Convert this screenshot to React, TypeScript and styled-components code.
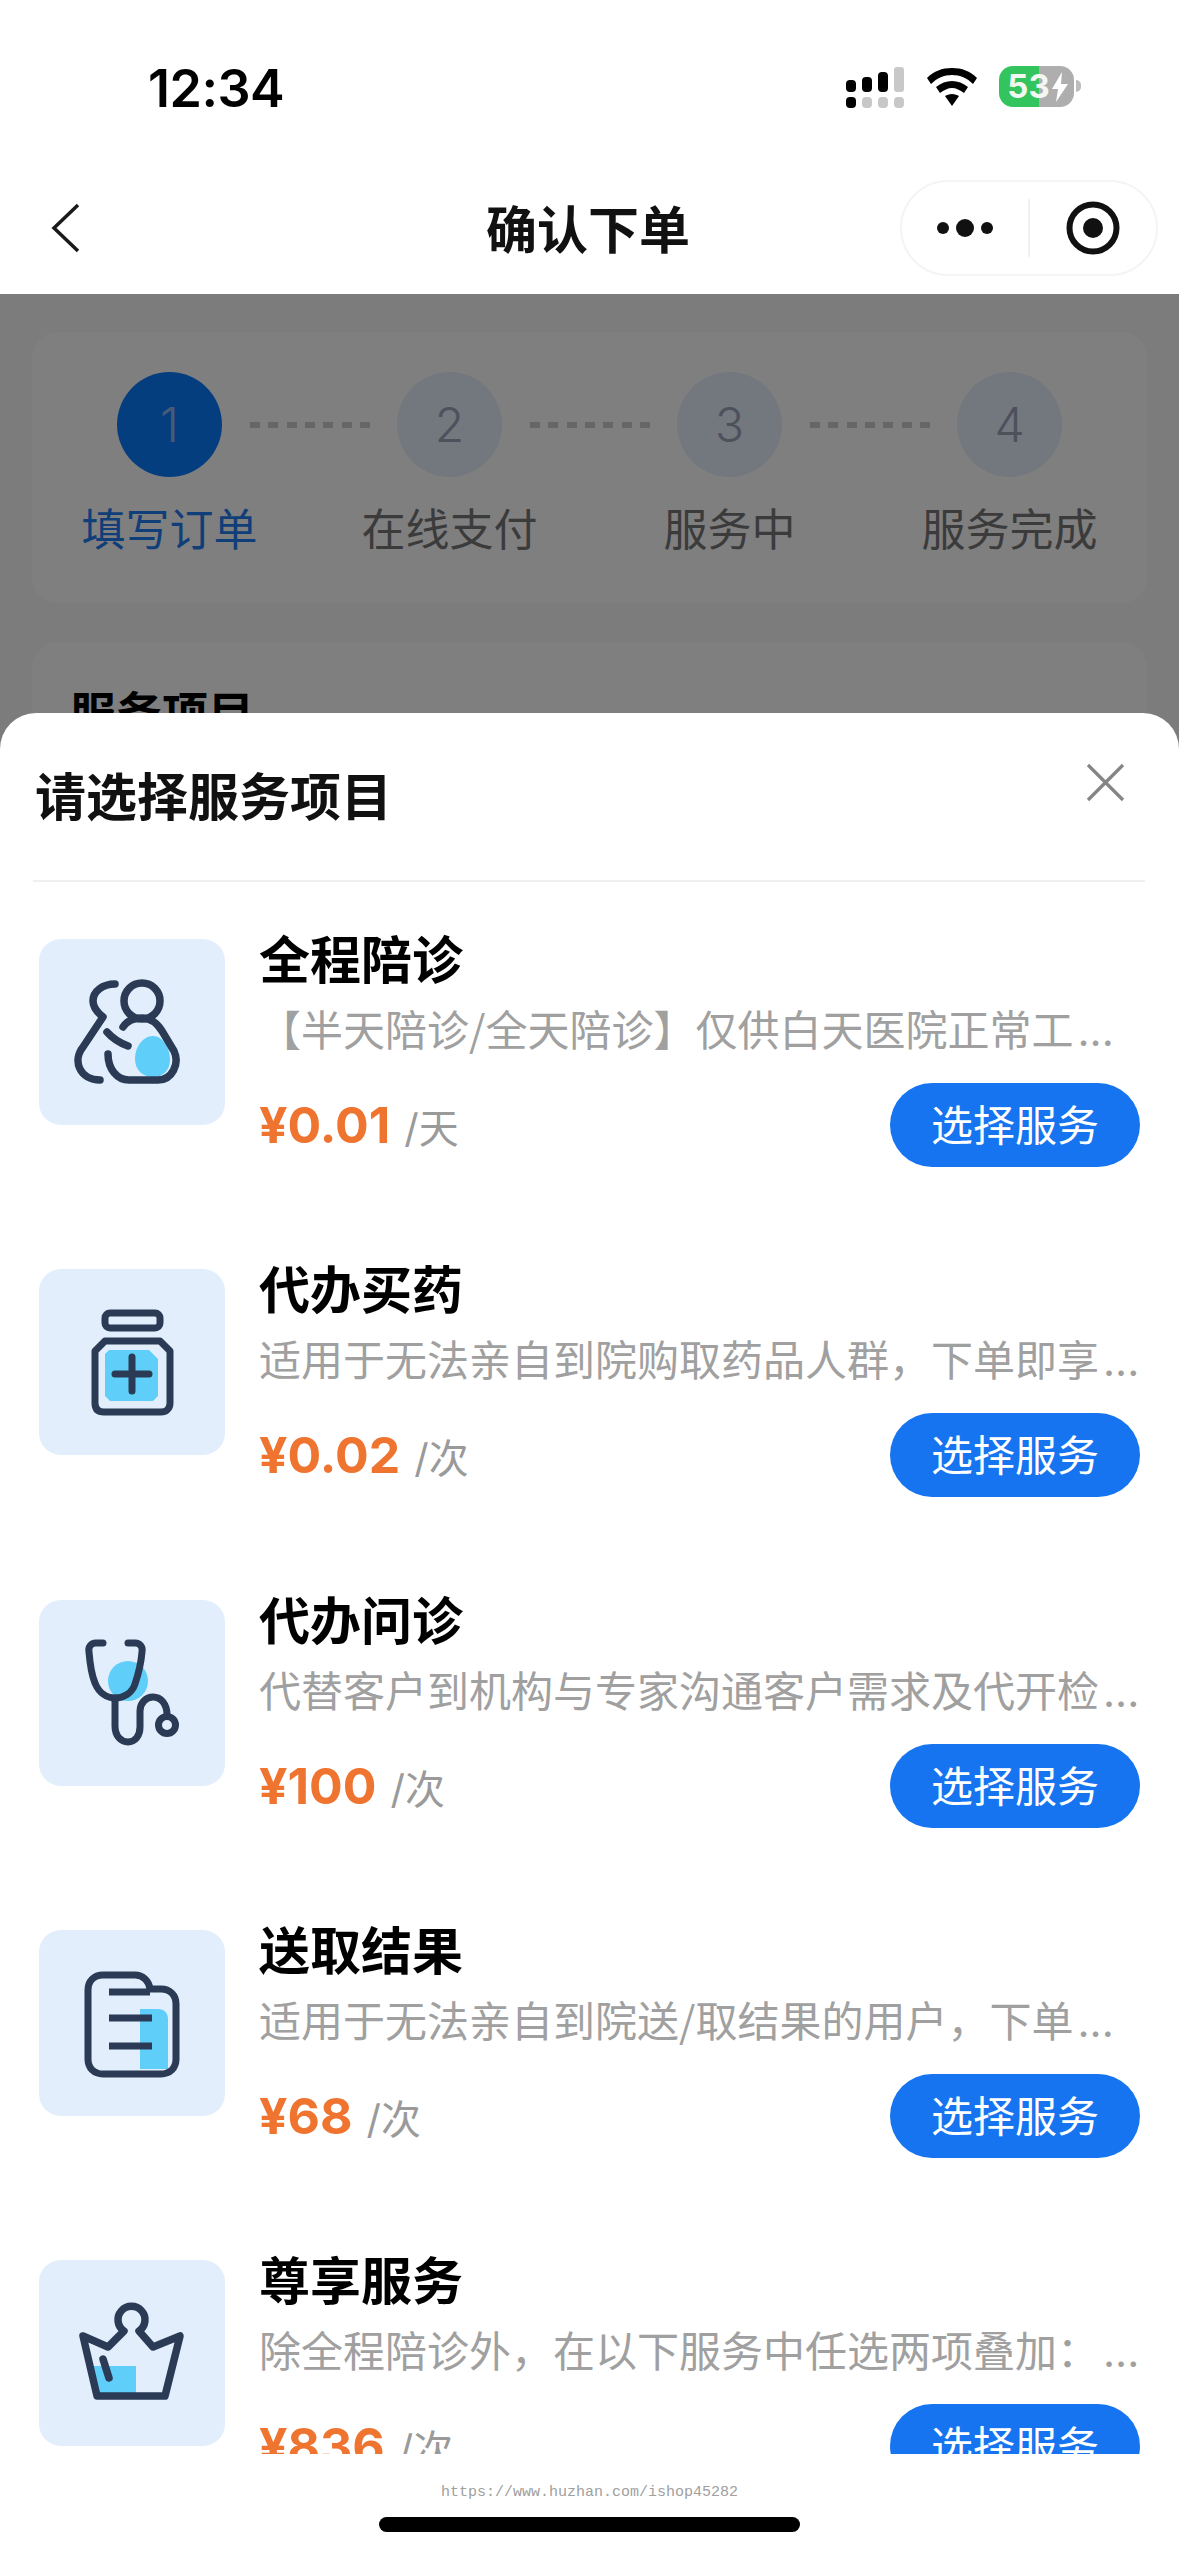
import React from "react";
import styled, { createGlobalStyle } from "styled-components";

const GlobalStyle = createGlobalStyle`
  html, body {
    margin: 0;
    padding: 0;
    background: #fff;
  }
  * {
    box-sizing: border-box;
  }
`;

const FONT = `"Inter", "Noto Sans CJK SC", sans-serif`;
const CJK = `"Noto Sans CJK SC", sans-serif`;
const INK = "#2b3a55";
const SKY = "#5fcffa";

const steps = [
  { num: 1, label: "填写订单" },
  { num: 2, label: "在线支付" },
  { num: 3, label: "服务中" },
  { num: 4, label: "服务完成" },
];

const HugIcon = () => (
  <IconSvg viewBox="0 0 186 186">
    <path fill={SKY} d="M96 120c0-12 8-23 18-23 10 0 17 12 17 24 0 11-8 17-17 17-10 0-18-7-18-18z" />
    <g fill="none" stroke={INK} strokeWidth="7.5" strokeLinecap="round" strokeLinejoin="round">
      <ellipse cx="103" cy="62" rx="18" ry="18" />
      <path d="M84 88c4-6 11-9 19-9 9 0 15 5 20 13l12 20c6 13-2 29-16 29H90c-12 0-21-11-21-26" />
      <path d="M76 45c-12 0-22 7-22 17 0 7 5 12 10 16L44 108c-11 14-3 33 17 33" />
      <path d="M68 93c6 7 13 11 21 14" />
    </g>
  </IconSvg>
);

const BottleIcon = () => (
  <IconSvg viewBox="0 0 186 186">
    <path fill={SKY} d="M70 81h40l9 9v37l-5 5H71l-5-5V85z" />
    <g fill="none" stroke={INK} strokeWidth="7" strokeLinecap="round" strokeLinejoin="round">
      <rect x="66" y="44" width="55" height="15" rx="5" />
      <path d="M66 72h55l10 10v52c0 6-4 9-9 9H65c-6 0-9-3-9-9V82z" />
      <path d="M76 105h34M93 88v34" />
    </g>
  </IconSvg>
);

const StethoscopeIcon = () => (
  <IconSvg viewBox="0 0 186 186">
    <circle cx="89" cy="81" r="20" fill={SKY} />
    <g fill="none" stroke={INK} strokeWidth="7" strokeLinecap="round" strokeLinejoin="round">
      <path d="M64 43h-7c-5 0-8 4-7 9 1 12 3 24 6 31 4 10 12 15 20 15 9 0 17-5 20-14 3-9 6-20 7-32 1-5-2-9-7-9h-7" />
      <path d="M76 98v28c0 10 6 16 13 16s12-6 12-15v-16c0-8 6-14 13-14 8 0 14 7 14 18" />
      <circle cx="128" cy="125" r="8.5" />
    </g>
  </IconSvg>
);

const ReportIcon = () => (
  <IconSvg viewBox="0 0 186 186">
    <path fill={SKY} d="M101 79h18c6 0 10 4 10 10v50h-28z" />
    <g fill="none" stroke={INK} strokeWidth="7" strokeLinecap="round" strokeLinejoin="round">
      <path d="M64 45h32c8 0 14 6 15 14h11c9 0 15 6 15 15v55c0 9-6 15-15 15H64c-9 0-15-6-15-15V60c0-9 6-15 15-15z" />
    </g>
    <g fill="none" stroke={INK} strokeWidth="7">
      <path d="M70 62h41M70 88h43M70 116h43" />
    </g>
  </IconSvg>
);

const CrownIcon = () => (
  <IconSvg viewBox="0 0 186 186">
    <path fill={SKY} d="M53 106h44v29H59z" />
    <g fill="none" stroke={INK} strokeWidth="7.5" strokeLinecap="round" strokeLinejoin="round">
      <path d="M44 76l25 11 16-16a13.5 13.5 0 1 1 15 0l14 16 27-11-15 60H58z" />
      <path d="M64 99l6 19" />
    </g>
  </IconSvg>
);

const services = [
  { title: "全程陪诊", desc: "【半天陪诊/全天陪诊】仅供白天医院正常工", price: "¥0.01", unit: "/天", Icon: HugIcon },
  { title: "代办买药", desc: "适用于无法亲自到院购取药品人群，下单即享", price: "¥0.02", unit: "/次", Icon: BottleIcon },
  { title: "代办问诊", desc: "代替客户到机构与专家沟通客户需求及代开检", price: "¥100", unit: "/次", Icon: StethoscopeIcon },
  { title: "送取结果", desc: "适用于无法亲自到院送/取结果的用户，下单", price: "¥68", unit: "/次", Icon: ReportIcon },
  { title: "尊享服务", desc: "除全程陪诊外，在以下服务中任选两项叠加：", price: "¥836", unit: "/次", Icon: CrownIcon },
];

export default function App() {
  return (
    <Page>
      <GlobalStyle />
      <StatusBar>
        <Time>12:34</Time>
        <StatusIcons>
          <svg width="58" height="42" viewBox="0 0 58 42">
            <rect x="0" y="14" width="10" height="12" rx="4" fill="#000" />
            <rect x="16" y="11" width="10" height="15" rx="4" fill="#000" />
            <rect x="32" y="6" width="10" height="20" rx="4" fill="#000" />
            <rect x="48" y="1" width="10" height="25" rx="3" fill="#c8c8c8" />
            <rect x="0" y="31" width="10" height="11" rx="4" fill="#000" />
            <rect x="16" y="31" width="10" height="11" rx="4" fill="#c8c8c8" />
            <rect x="32" y="31" width="10" height="11" rx="4" fill="#c8c8c8" />
            <rect x="48" y="31" width="10" height="11" rx="4" fill="#c8c8c8" />
          </svg>
          <svg width="50" height="38" viewBox="0 0 50 38">
            <path d="M25 0c10 0 18 3 25 10l-4 6C40 10 33 7 25 7S10 10 4 16L0 10C7 3 15 0 25 0z" fill="#000" />
            <path d="M25 13c6 0 11 2 16 6l-4 6c-4-3-8-5-12-5s-8 2-12 5l-4-6c5-4 10-6 16-6z" fill="#000" />
            <path d="M25 26c3 0 5 1 7 2l-7 10-7-10c2-1 4-2 7-2z" fill="#000" />
          </svg>
          <Battery>
            <BatteryValue>53</BatteryValue>
            <svg width="18" height="30" viewBox="0 0 18 30">
              <path d="M11 0L1 17h6l-2 13L17 12h-7z" fill="#fff" />
            </svg>
            <BatteryNub />
          </Battery>
        </StatusIcons>
      </StatusBar>

      <NavBar>
        <svg width="33" height="52" viewBox="0 0 33 52">
          <path d="M29 3L5 26l24 23" fill="none" stroke="#1a1a1a" strokeWidth="3.5" />
        </svg>
        <NavTitle>确认下单</NavTitle>
        <Capsule>
          <CapsuleSlot>
            <svg width="58" height="24" viewBox="0 0 58 24">
              <circle cx="7" cy="12" r="6" fill="#111" />
              <circle cx="29" cy="12" r="9" fill="#111" />
              <circle cx="51" cy="12" r="6" fill="#111" />
            </svg>
          </CapsuleSlot>
          <CapsuleDivider />
          <CapsuleSlot>
            <svg width="54" height="54" viewBox="0 0 54 54">
              <circle cx="27" cy="27" r="23.5" fill="none" stroke="#111" strokeWidth="6" />
              <circle cx="27" cy="27" r="10" fill="#111" />
            </svg>
          </CapsuleSlot>
        </Capsule>
      </NavBar>

      <Body>
        <StepCard>
          {steps.map((step, i) => (
            <React.Fragment key={step.num}>
              <Step>
                <StepCircle $active={i === 0}>{step.num}</StepCircle>
                <StepLabel $active={i === 0}>{step.label}</StepLabel>
              </Step>
              {i < steps.length - 1 && (
                <StepDots>
                  {Array.from({ length: 7 }).map((_, d) => (
                    <StepDot key={d} />
                  ))}
                </StepDots>
              )}
            </React.Fragment>
          ))}
        </StepCard>
        <ServiceCard>
          <ServiceCardTitle>服务项目</ServiceCardTitle>
        </ServiceCard>

        <Overlay />

        <Sheet>
          <SheetHead>
            <SheetTitle>请选择服务项目</SheetTitle>
            <CloseButton>
              <svg width="39" height="39" viewBox="0 0 39 39">
                <path d="M2 2l35 35M37 2L2 37" fill="none" stroke="#858585" strokeWidth="3.2" />
              </svg>
            </CloseButton>
          </SheetHead>
          <List>
            {services.map(({ Icon, ...s }) => (
              <Row key={s.title}>
                <IconBox>
                  <Icon />
                </IconBox>
                <Info>
                  <Name>{s.title}</Name>
                  <Desc>
                    {s.desc}
                    <DescDots>...</DescDots>
                  </Desc>
                  <Bottom>
                    <PriceWrap>
                      <Price>{s.price}</Price>
                      <Unit>{s.unit}</Unit>
                    </PriceWrap>
                    <SelectButton>选择服务</SelectButton>
                  </Bottom>
                </Info>
              </Row>
            ))}
          </List>
          <SheetFoot>
            <Watermark>https://www.huzhan.com/ishop45282</Watermark>
            <HomeBar />
          </SheetFoot>
        </Sheet>
      </Body>
    </Page>
  );
}

const Page = styled.div`
  display: flex;
  flex-direction: column;
  width: 1179px;
  height: 2556px;
  overflow: hidden;
  background: #fff;
  font-family: ${CJK};
`;

const StatusBar = styled.div`
  display: flex;
  align-items: center;
  justify-content: space-between;
  height: 176px;
  padding: 0 105px 0 148px;
`;

const Time = styled.div`
  font-family: ${FONT};
  font-size: 52px;
  font-weight: 600;
  color: #000;
  letter-spacing: -0.5px;
`;

const StatusIcons = styled.div`
  display: flex;
  align-items: center;
  gap: 23px;
  margin-bottom: 3px;
`;

const Battery = styled.div`
  position: relative;
  display: flex;
  align-items: center;
  justify-content: center;
  gap: 1px;
  width: 75px;
  height: 41px;
  margin-left: -1px;
  padding-left: 3px;
  border-radius: 14px;
  background: linear-gradient(90deg, #34c45d 0 40px, #aeaeae 40px);
`;

const BatteryValue = styled.span`
  font-family: ${FONT};
  font-size: 33px;
  font-weight: 700;
  line-height: 1;
  color: #f2f7f2;
`;

const BatteryNub = styled.span`
  position: absolute;
  right: -7px;
  top: 14px;
  width: 5px;
  height: 12px;
  border-radius: 0 6px 6px 0;
  background: #bdbdbd;
`;

const NavBar = styled.div`
  position: relative;
  display: flex;
  align-items: center;
  height: 118px;
  padding: 0 21px 14px 49px;
`;

const NavTitle = styled.div`
  position: absolute;
  left: 486px;
  top: 0;
  width: 200px;
  text-align: center;
  font-size: 51px;
  font-weight: 700;
  line-height: 102px;
  white-space: nowrap;
  color: #111;
`;

const Capsule = styled.div`
  display: flex;
  align-items: center;
  width: 258px;
  height: 96px;
  margin-left: auto;
  border: 2px solid #f4f4f4;
  border-radius: 48px;
`;

const CapsuleSlot = styled.div`
  display: flex;
  flex: 1;
  align-items: center;
  justify-content: center;
`;

const CapsuleDivider = styled.div`
  width: 2px;
  height: 58px;
  background: #f0f0f0;
`;

const Body = styled.div`
  position: relative;
  flex: 1;
  display: flex;
  flex-direction: column;
  padding: 38px 32px 0;
  background: #f8f8f8;
`;

const StepCard = styled.div`
  display: flex;
  align-items: flex-start;
  justify-content: center;
  height: 271px;
  padding-top: 40px;
  border-radius: 26px;
  background: #fff;
`;

const Step = styled.div`
  display: flex;
  flex-direction: column;
  align-items: center;
  width: 105px;
`;

const StepCircle = styled.div<{ $active: boolean }>`
  display: flex;
  align-items: center;
  justify-content: center;
  width: 105px;
  height: 105px;
  border-radius: 50%;
  font-family: ${FONT};
  font-size: 48px;
  font-weight: 300;
  color: ${({ $active }) => ($active ? "#8fb6ee" : "#9aa3b8")};
  background: ${({ $active }) => ($active ? "#0b7cff" : "#e6eefc")};
`;

const StepLabel = styled.div<{ $active: boolean }>`
  margin-top: 23px;
  font-size: 44px;
  line-height: 54px;
  white-space: nowrap;
  color: ${({ $active }) => ($active ? "#1f7cf0" : "#777")};
`;

const StepDots = styled.div`
  display: flex;
  justify-content: space-between;
  width: 120px;
  margin: 50px 27px 0 28px;
`;

const StepDot = styled.span`
  width: 10px;
  height: 6px;
  background: #ccc;
`;

const ServiceCard = styled.div`
  flex: 1;
  margin-top: 39px;
  padding: 41px 41px;
  border-radius: 26px 26px 0 0;
  background: #fff;
`;

const ServiceCardTitle = styled.div`
  margin-left: -3px;
  font-size: 46px;
  font-weight: 700;
  line-height: 54px;
  color: #000;
`;

const Overlay = styled.div`
  position: absolute;
  inset: 0;
  background: rgba(0, 0, 0, 0.5);
`;

const Sheet = styled.div`
  position: absolute;
  left: 0;
  right: 0;
  top: 419px;
  bottom: 0;
  display: flex;
  flex-direction: column;
  border-radius: 36px 36px 0 0;
  background: #fff;
`;

const SheetHead = styled.div`
  position: relative;
  display: flex;
  align-items: center;
  height: 169px;
  margin: 0 34px 0 33px;
  border-bottom: 2px solid #f0f0f0;
`;

const SheetTitle = styled.div`
  margin: -6px 0 0 2px;
  font-size: 51px;
  font-weight: 700;
  line-height: 170px;
  color: #111;
`;

const CloseButton = styled.div`
  position: absolute;
  right: 20px;
  top: 50px;
  line-height: 0;
`;

const List = styled.div`
  flex: 1;
  display: flex;
  flex-direction: column;
  gap: 98.25px;
  min-height: 0;
  padding: 53px 39px 0;
  overflow: hidden;
`;

const Row = styled.div`
  display: flex;
  flex-shrink: 0;
  gap: 34px;
`;

const IconBox = styled.div`
  flex-shrink: 0;
  width: 186px;
  height: 186px;
  margin-top: 4px;
  border-radius: 22px;
  background: #e2eefc;
`;

const IconSvg = styled.svg`
  display: block;
  width: 186px;
  height: 186px;
`;

const Info = styled.div`
  display: flex;
  flex: 1;
  flex-direction: column;
  min-width: 0;
`;

const Name = styled.div`
  margin-top: -3px;
  font-size: 51px;
  font-weight: 700;
  line-height: 50px;
  white-space: nowrap;
  color: #000;
`;

const Desc = styled.div`
  margin-top: 21px;
  font-size: 42px;
  line-height: 50px;
  white-space: nowrap;
  color: #a0a0a0;
`;

const DescDots = styled.span`
  margin-left: 4px;
  font-family: ${FONT};
  line-height: 0;
`;

const Bottom = styled.div`
  display: flex;
  align-items: center;
  justify-content: space-between;
  margin-top: 30px;
`;

const PriceWrap = styled.div`
  display: flex;
  align-items: center;
  gap: 14px;
`;

const Price = styled.span`
  font-family: ${FONT};
  font-size: 50px;
  font-weight: 700;
  line-height: 84px;
  color: #ef7430;
`;

const Unit = styled.span`
  padding-top: 8px;
  font-family: ${FONT};
  font-size: 40px;
  line-height: 76px;
  color: #9a9a9a;
`;

const SelectButton = styled.button`
  width: 250px;
  height: 84px;
  padding: 0 0 5px;
  border: none;
  border-radius: 42px;
  font-family: ${CJK};
  font-size: 42px;
  color: #fff;
  background: #1674f0;
`;

const SheetFoot = styled.div`
  display: flex;
  flex-direction: column;
  align-items: center;
  flex-shrink: 0;
  height: 102px;
  padding-top: 30px;
`;

const Watermark = styled.div`
  font-family: "Liberation Mono", monospace;
  font-size: 15px;
  line-height: 18px;
  color: #a0a0a0;
`;

const HomeBar = styled.div`
  width: 421px;
  height: 15px;
  margin-top: 15px;
  border-radius: 8px;
  background: #000;
`;
